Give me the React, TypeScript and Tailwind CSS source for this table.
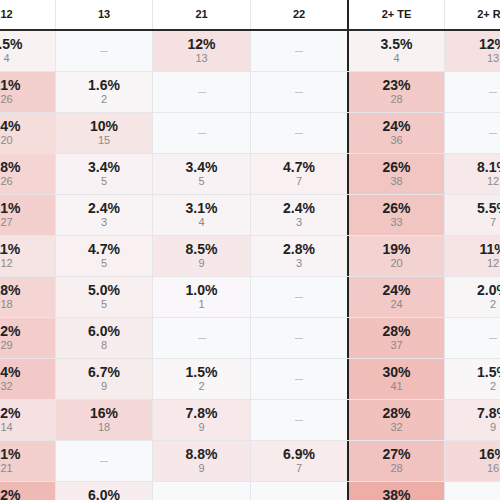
import React from 'react'

type Cell = [string, number] | null

const COLS: { label: string; w: string }[] = [
  { label: '12', w: 'w-[98px]' },
  { label: '13', w: 'w-[97px]' },
  { label: '21', w: 'w-[98px]' },
  { label: '22', w: 'w-[98px]' },
  { label: '2+ TE', w: 'w-[96px]' },
  { label: '2+ RB', w: 'w-[97px]' },
]

const ROWS: Cell[][] = [
  [['3.5%', 4], null, ['12%', 13], null, ['3.5%', 4], ['12%', 13]],
  [['21%', 26], ['1.6%', 2], null, null, ['23%', 28], null],
  [['14%', 20], ['10%', 15], null, null, ['24%', 36], null],
  [['18%', 26], ['3.4%', 5], ['3.4%', 5], ['4.7%', 7], ['26%', 38], ['8.1%', 12]],
  [['21%', 27], ['2.4%', 3], ['3.1%', 4], ['2.4%', 3], ['26%', 33], ['5.5%', 7]],
  [['11%', 12], ['4.7%', 5], ['8.5%', 9], ['2.8%', 3], ['19%', 20], ['11%', 12]],
  [['18%', 18], ['5.0%', 5], ['1.0%', 1], null, ['24%', 24], ['2.0%', 2]],
  [['22%', 29], ['6.0%', 8], null, null, ['28%', 37], null],
  [['24%', 32], ['6.7%', 9], ['1.5%', 2], null, ['30%', 41], ['1.5%', 2]],
  [['12%', 14], ['16%', 18], ['7.8%', 9], null, ['28%', 32], ['7.8%', 9]],
  [['21%', 21], null, ['8.8%', 9], ['6.9%', 7], ['27%', 28], ['16%', 16]],
  [['32%', 40], ['6.0%', 7], null, null, ['38%', 47], null],
]

// heat colour from the percentage
function heat(cell: Cell) {
  if (!cell) return '#f8f9fb'
  const p = parseFloat(cell[0])
  const r = Math.round(249 - 0.3 * p)
  const g = Math.round(249 - 2.0 * p)
  const b = Math.round(251 - 2.2 * p)
  return `rgb(${r},${g},${b})`
}

function sep(i: number) {
  return i === 3 ? 'border-r-2 border-r-[#222]' : 'border-r border-r-[#e6e6ea]'
}

export default function App() {
  return (
    <div className="w-[500px] h-[500px] overflow-hidden bg-white font-['Liberation_Sans',Arial,sans-serif]">
      <div className="-ml-[42px] w-max">
        <div className="flex h-[31px] border-b-2 border-b-[#2a2a2a] bg-white">
          {COLS.map((c, i) => (
            <div
              key={c.label}
              className={`${c.w} ${sep(i)} flex items-center justify-center text-[11px] font-bold text-[#1a1a1a] whitespace-nowrap`}
            >
              {c.label}
            </div>
          ))}
        </div>
        {ROWS.map((row, r) => (
          <div key={r} className="flex h-[41px] border-b border-b-[#e6e6ea]">
            {row.map((cell, i) => (
              <div
                key={i}
                className={`${COLS[i].w} ${sep(i)} flex flex-col items-center justify-center`}
                style={{ background: heat(cell) }}
              >
                {cell ? (
                  <>
                    <span className="text-[14px] leading-[15px] font-bold text-[#222]">{cell[0]}</span>
                    <span className="text-[11px] leading-[13px] text-[#8a8a8a]">{cell[1]}</span>
                  </>
                ) : (
                  <span className="block w-[8px] h-px bg-[#c4c4c8]" />
                )}
              </div>
            ))}
          </div>
        ))}
      </div>
    </div>
  )
}
